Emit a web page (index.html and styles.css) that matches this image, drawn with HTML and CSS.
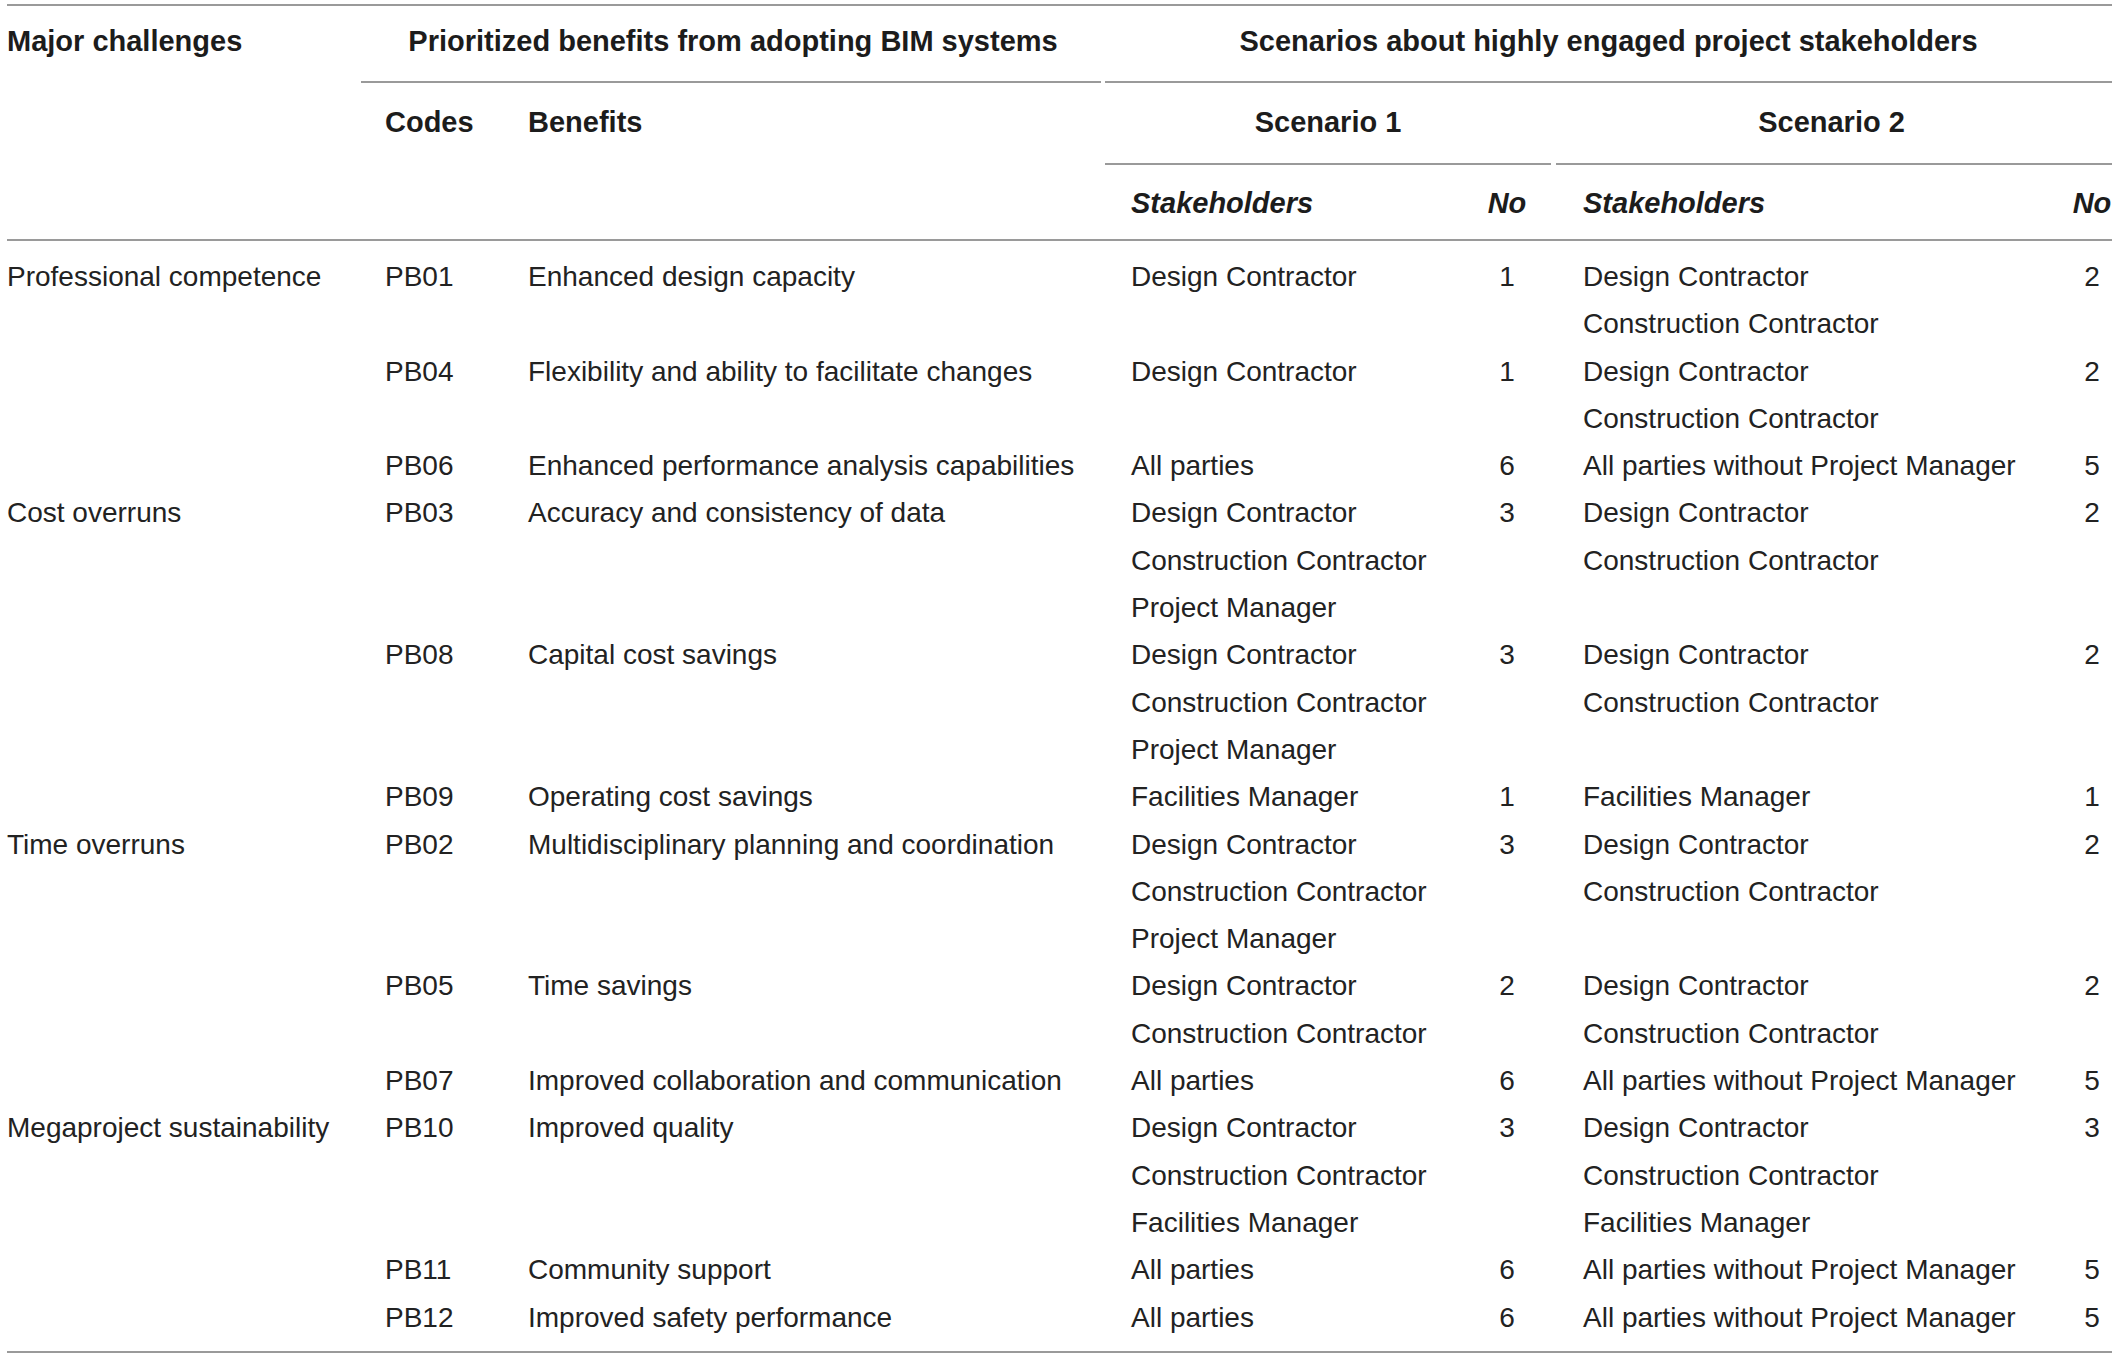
FILE: index.html
```html
<!DOCTYPE html>
<html lang="en">
<head>
<meta charset="utf-8">
<title>BIM benefits and stakeholder scenarios</title>
<link rel="stylesheet" href="styles.css">
</head>
<body>
<table class="tbl">
  <colgroup>
    <col class="c-a"><col class="c-b"><col class="c-c"><col class="c-d"><col class="c-e"><col class="c-f"><col class="c-g">
  </colgroup>
  <thead>
    <tr class="h1">
      <th class="ca hb" rowspan="3">Major challenges</th>
      <th class="ctr rule-l" colspan="2">Prioritized benefits from adopting BIM systems</th>
      <th class="ctr rule-full" colspan="4">Scenarios about highly engaged project stakeholders</th>
    </tr>
    <tr class="h2">
      <th class="cb hb" rowspan="2">Codes</th>
      <th class="cc hb" rowspan="2">Benefits</th>
      <th class="ctr rule-full" colspan="2">Scenario 1</th>
      <th class="ctr rule-r" colspan="2">Scenario 2</th>
    </tr>
    <tr class="h3">
      <th class="cd hb it">Stakeholders</th>
      <th class="ce hb it">No</th>
      <th class="cf hb it">Stakeholders</th>
      <th class="cg hb it">No</th>
    </tr>
  </thead>
  <tbody>
    <tr class="first">
      <td class="ca" rowspan="3">Professional competence</td>
      <td class="cb">PB01</td><td class="cc">Enhanced design capacity</td>
      <td class="cd">Design Contractor</td><td class="ce">1</td>
      <td class="cf">Design Contractor<br>Construction Contractor</td><td class="cg">2</td>
    </tr>
    <tr>
      <td class="cb">PB04</td><td class="cc">Flexibility and ability to facilitate changes</td>
      <td class="cd">Design Contractor</td><td class="ce">1</td>
      <td class="cf">Design Contractor<br>Construction Contractor</td><td class="cg">2</td>
    </tr>
    <tr>
      <td class="cb">PB06</td><td class="cc">Enhanced performance analysis capabilities</td>
      <td class="cd">All parties</td><td class="ce">6</td>
      <td class="cf">All parties without Project Manager</td><td class="cg">5</td>
    </tr>
    <tr>
      <td class="ca" rowspan="3">Cost overruns</td>
      <td class="cb">PB03</td><td class="cc">Accuracy and consistency of data</td>
      <td class="cd">Design Contractor<br>Construction Contractor<br>Project Manager</td><td class="ce">3</td>
      <td class="cf">Design Contractor<br>Construction Contractor</td><td class="cg">2</td>
    </tr>
    <tr>
      <td class="cb">PB08</td><td class="cc">Capital cost savings</td>
      <td class="cd">Design Contractor<br>Construction Contractor<br>Project Manager</td><td class="ce">3</td>
      <td class="cf">Design Contractor<br>Construction Contractor</td><td class="cg">2</td>
    </tr>
    <tr>
      <td class="cb">PB09</td><td class="cc">Operating cost savings</td>
      <td class="cd">Facilities Manager</td><td class="ce">1</td>
      <td class="cf">Facilities Manager</td><td class="cg">1</td>
    </tr>
    <tr>
      <td class="ca" rowspan="3">Time overruns</td>
      <td class="cb">PB02</td><td class="cc">Multidisciplinary planning and coordination</td>
      <td class="cd">Design Contractor<br>Construction Contractor<br>Project Manager</td><td class="ce">3</td>
      <td class="cf">Design Contractor<br>Construction Contractor</td><td class="cg">2</td>
    </tr>
    <tr>
      <td class="cb">PB05</td><td class="cc">Time savings</td>
      <td class="cd">Design Contractor<br>Construction Contractor</td><td class="ce">2</td>
      <td class="cf">Design Contractor<br>Construction Contractor</td><td class="cg">2</td>
    </tr>
    <tr>
      <td class="cb">PB07</td><td class="cc">Improved collaboration and communication</td>
      <td class="cd">All parties</td><td class="ce">6</td>
      <td class="cf">All parties without Project Manager</td><td class="cg">5</td>
    </tr>
    <tr>
      <td class="ca" rowspan="3">Megaproject sustainability</td>
      <td class="cb">PB10</td><td class="cc">Improved quality</td>
      <td class="cd">Design Contractor<br>Construction Contractor<br>Facilities Manager</td><td class="ce">3</td>
      <td class="cf">Design Contractor<br>Construction Contractor<br>Facilities Manager</td><td class="cg">3</td>
    </tr>
    <tr>
      <td class="cb">PB11</td><td class="cc">Community support</td>
      <td class="cd">All parties</td><td class="ce">6</td>
      <td class="cf">All parties without Project Manager</td><td class="cg">5</td>
    </tr>
    <tr class="last">
      <td class="cb">PB12</td><td class="cc">Improved safety performance</td>
      <td class="cd">All parties</td><td class="ce">6</td>
      <td class="cf">All parties without Project Manager</td><td class="cg">5</td>
    </tr>
  </tbody>
</table>
</body>
</html>
```
FILE: styles.css
```css
html, body {
  margin: 0;
  padding: 0;
  background: #ffffff;
}

body {
  padding: 4px 0 0 7px;
  font-family: "Liberation Sans", Arial, sans-serif;
  color: #222222;
}

.tbl {
  table-layout: fixed;
  width: 2105px;
  border-collapse: separate;
  border-spacing: 0;
  border-top: 2px solid #9a9a9a;
  border-bottom: 2px solid #9a9a9a;
}

.c-a { width: 354px; }
.c-b { width: 143px; }
.c-c { width: 601px; }
.c-d { width: 358px; }
.c-e { width: 88px; }
.c-f { width: 521px; }
.c-g { width: 40px; }

th, td {
  padding: 0;
  white-space: nowrap;
  vertical-align: top;
  text-align: left;
}

th {
  font-size: 29px;
  font-weight: bold;
  line-height: 47px;
  color: #1c1c1c;
}

td {
  font-size: 28px;
  font-weight: normal;
  line-height: 47.3px;
}

.it { font-style: italic; }

.ca { padding-left: 0; }
.cb { padding-left: 24px; }
.cc { padding-left: 24px; }
.cd { padding-left: 26px; }
.ce { text-align: center; }
.cf { padding-left: 32px; }
.cg { text-align: center; }
th.ctr { text-align: center; }

.h1 th { padding-top: 12px; padding-bottom: 18px; }
.h2 th { padding-top: 16px; padding-bottom: 19px; }
.h3 th { padding-top: 15px; padding-bottom: 12px; }
.h1 th.ca { padding-top: 12px; }
.h2 th.cb, .h2 th.cc { padding-top: 16px; }

.hb { border-bottom: 2px solid #9a9a9a; }

.rule-l {
  background: linear-gradient(#9a9a9a, #9a9a9a) no-repeat left bottom / calc(100% - 4px) 2px;
}
.rule-full {
  background: linear-gradient(#9a9a9a, #9a9a9a) no-repeat left bottom / 100% 2px;
}
.rule-r {
  background: linear-gradient(#9a9a9a, #9a9a9a) no-repeat right bottom / calc(100% - 5px) 2px;
}

.first td { padding-top: 12px; }
.last td { padding-bottom: 10px; }
```
